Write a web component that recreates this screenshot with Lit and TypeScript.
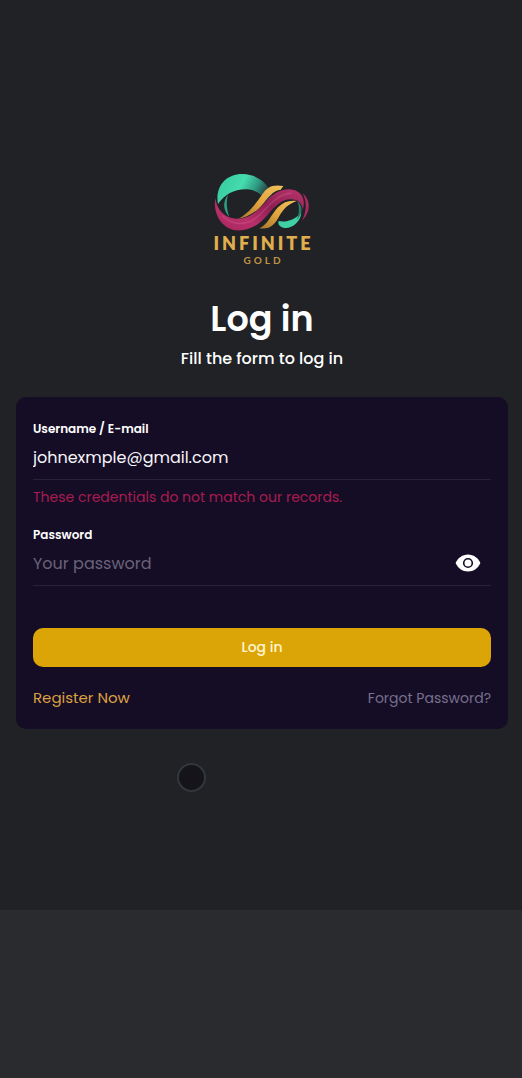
import { LitElement, html, css } from "lit";
import { customElement, state } from "lit/decorators.js";

@customElement("brand-logo")
export class BrandLogo extends LitElement {
  static styles = css`
    :host {
      display: flex;
      flex-direction: column;
      align-items: center;
    }
    .mark {
      display: block;
      width: 100px;
      height: 60px;
    }
    .name {
      font: 800 18px/22px Lato, sans-serif;
      letter-spacing: 3px;
      margin-right: -3px;
      color: #e0ae4c;
    }
    .sub {
      font: 700 10px/12px Lato, sans-serif;
      letter-spacing: 3px;
      margin-right: -3px;
      color: #c09344;
    }
  `;

  render() {
    return html`
      <svg class="mark" viewBox="30 20 300 180" aria-hidden="true">
        <defs>
          <linearGradient id="teal" x1="0" y1="0" x2="1" y2="0.3">
            <stop offset="0" stop-color="#35c79c" />
            <stop offset="0.5" stop-color="#45dcae" />
            <stop offset="0.75" stop-color="#2f9a82" />
            <stop offset="1" stop-color="#27323b" />
          </linearGradient>
          <linearGradient id="pink" x1="0" y1="1" x2="1" y2="0">
            <stop offset="0" stop-color="#a8265f" />
            <stop offset="0.3" stop-color="#b83069" />
            <stop offset="0.6" stop-color="#8e1f52" />
            <stop offset="1" stop-color="#b8356c" />
          </linearGradient>
          <linearGradient id="gold" x1="0" y1="1" x2="1" y2="0">
            <stop offset="0" stop-color="#a8762c" />
            <stop offset="0.5" stop-color="#e3a63f" />
            <stop offset="1" stop-color="#f0c15c" />
          </linearGradient>
        </defs>
        <path fill="url(#teal)" d="M48 116C38 62 74 25 122 26C158 27 184 44 200 68L214 96L194 108C180 88 162 74 136 72C100 70 68 86 48 116Z" />
        <path fill="#2c9f83" d="M78 88C62 108 62 134 82 154C74 132 72 108 78 88Z" />
        <path fill="url(#gold)" d="M104 162C134 150 158 120 180 88C194 66 210 56 244 62L236 73C214 76 202 92 186 112C162 142 136 156 104 162Z" />
        <path fill="url(#gold)" d="M172 189C196 180 206 150 228 126C244 110 262 104 284 107C258 116 244 132 232 152C220 176 204 194 172 189Z" />
        <path fill="#3fd0a3" d="M230 167C252 172 276 164 298 142C296 170 268 192 244 187C232 184 227 176 230 167Z" />
        <path fill="#257c68" d="M286 108C304 124 302 146 284 164C292 144 293 126 286 108Z" />
        <path fill="url(#pink)" d="M40 98C44 132 66 158 102 160C146 162 172 130 198 102C222 78 248 67 276 74C300 81 312 104 302 134C300 114 288 102 266 102C238 102 218 124 196 150C172 178 142 198 102 195C60 190 32 146 40 98Z" />
        <path fill="none" stroke="#e0669a" stroke-opacity="0.3" stroke-width="5" stroke-linecap="round" d="M62 152C96 186 142 178 174 148C206 114 232 84 268 84" />
        <path fill="#a82b63" d="M302 84C326 104 328 140 300 166C313 140 316 112 302 84Z" />
      </svg>
      <span class="name">INFINITE</span>
      <span class="sub">GOLD</span>
    `;
  }
}

@customElement("app-root")
export class AppRoot extends LitElement {
  @state() private reveal = false;

  static styles = css`
    :host {
      display: flex;
      flex-direction: column;
      min-height: 100vh;
      background: #212226;
      color: #fff;
      font-family: Poppins, Inter, sans-serif;
      font-size: 15px;
    }
    * {
      box-sizing: border-box;
    }
    main {
      position: relative;
      flex: 1;
      display: flex;
      flex-direction: column;
      justify-content: center;
      padding: 0 14px 9px 16px;
    }
    .bar {
      height: 168px;
      background: #2a2b2f;
    }
    h1 {
      margin: 29px 0 0;
      font-size: 35px;
      line-height: 48px;
      font-weight: 600;
      text-align: center;
    }
    .lead {
      margin: 6px 0 28px;
      font-size: 16px;
      line-height: 20px;
      font-weight: 500;
      text-align: center;
    }
    form {
      padding: 22px 17px 20px;
      border-radius: 10px;
      background: #150d26;
    }
    label {
      display: block;
      font-size: 12px;
      line-height: 20px;
      font-weight: 600;
    }
    .field {
      display: flex;
      align-items: center;
      height: 41px;
      padding-bottom: 4px;
      border-bottom: 1px solid #292237;
    }
    input {
      flex: 1;
      min-width: 0;
      height: 36px;
      padding: 0;
      border: 0;
      outline: 0;
      background: none;
      color: #f7f5fa;
      font: inherit;
      font-size: 16px;
    }
    input::placeholder {
      color: #696378;
      opacity: 1;
    }
    .error {
      margin: 7px 0 18px;
      font-size: 14px;
      line-height: 20px;
      color: #a91c50;
    }
    .eye {
      display: flex;
      margin-right: 10px;
      padding: 0;
      border: 0;
      background: none;
    }
    .submit {
      display: block;
      width: 100%;
      height: 39px;
      margin: 42px 0 20px;
      border: 0;
      border-radius: 10px;
      background: #dca507;
      color: #fff6d0;
      font: inherit;
      font-size: 14px;
      font-weight: 500;
    }
    .links {
      display: flex;
      justify-content: space-between;
      line-height: 22px;
    }
    a {
      text-decoration: none;
    }
    .register {
      color: #dda041;
    }
    .forgot {
      color: #776f8c;
      font-size: 14px;
    }
    .touch {
      position: absolute;
      left: 177px;
      top: 763px;
      width: 29px;
      height: 29px;
      border: 2px solid #33363b;
      border-radius: 50%;
      background: #14141a;
    }
  `;

  render() {
    return html`
      <main>
        <brand-logo></brand-logo>
        <h1>Log in</h1>
        <p class="lead">Fill the form to log in</p>
        <form @submit=${(e: Event) => e.preventDefault()}>
          <label for="user">Username / E-mail</label>
          <div class="field">
            <input id="user" type="text" value="johnexmple@gmail.com" spellcheck="false" />
          </div>
          <p class="error">These credentials do not match our records.</p>
          <label for="pass">Password</label>
          <div class="field">
            <input id="pass" type=${this.reveal ? "text" : "password"} placeholder="Your password" />
            <button class="eye" type="button" aria-label="Show password" @click=${() => (this.reveal = !this.reveal)}>
              <svg width="26" height="18" viewBox="0 0 26 18">
                <path fill="#fff" d="M13 0.5C7.500 0.500 2.800 4 0.600 9C2.800 14 7.500 17.500 13 17.500S23.200 14 25.400 9C23.200 4 18.500 0.500 13 0.500Z" />
                <circle cx="13" cy="9" r="4.300" fill="#fff" stroke="#150d26" stroke-width="1.600" />
              </svg>
            </button>
          </div>
          <button class="submit" type="submit">Log in</button>
          <div class="links">
            <a class="register" href="#register">Register Now</a>
            <a class="forgot" href="#forgot">Forgot Password?</a>
          </div>
        </form>
        <span class="touch"></span>
      </main>
      <div class="bar"></div>
    `;
  }
}
